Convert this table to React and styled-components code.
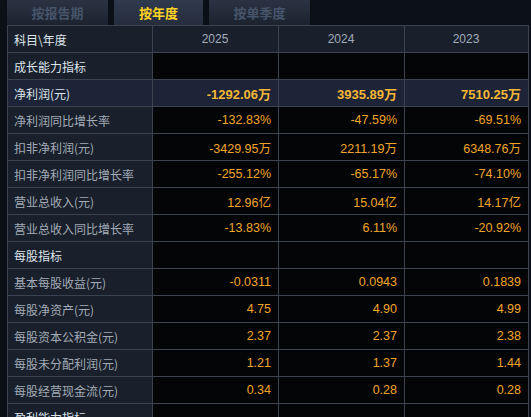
import React from "react";
import styled, { createGlobalStyle } from "styled-components";

const GlobalStyle = createGlobalStyle`
  html, body {
    margin: 0;
    padding: 0;
    background: #0b0f16;
  }
  body {
    font-family: "Liberation Sans", "Noto Sans CJK SC", sans-serif;
  }
`;

const tabs = ["按报告期", "按年度", "按单季度"];
const years = ["2025", "2024", "2023"];

const rows = [
  { label: "成长能力指标", section: true },
  { label: "净利润(元)", values: ["-1292.06万", "3935.89万", "7510.25万"], strong: true },
  { label: "净利润同比增长率", values: ["-132.83%", "-47.59%", "-69.51%"] },
  { label: "扣非净利润(元)", values: ["-3429.95万", "2211.19万", "6348.76万"] },
  { label: "扣非净利润同比增长率", values: ["-255.12%", "-65.17%", "-74.10%"] },
  { label: "营业总收入(元)", values: ["12.96亿", "15.04亿", "14.17亿"] },
  { label: "营业总收入同比增长率", values: ["-13.83%", "6.11%", "-20.92%"] },
  { label: "每股指标", section: true },
  { label: "基本每股收益(元)", values: ["-0.0311", "0.0943", "0.1839"] },
  { label: "每股净资产(元)", values: ["4.75", "4.90", "4.99"] },
  { label: "每股资本公积金(元)", values: ["2.37", "2.37", "2.38"] },
  { label: "每股未分配利润(元)", values: ["1.21", "1.37", "1.44"] },
  { label: "每股经营现金流(元)", values: ["0.34", "0.28", "0.28"] },
  { label: "盈利能力指标", section: true },
];

const Page = styled.div`
  width: 531px;
  height: 417px;
  overflow: hidden;
  padding-left: 7px;
  box-sizing: border-box;
`;

const TabBar = styled.div`
  display: flex;
  gap: 6px;
  height: 25px;
`;

const Tab = styled.div`
  width: ${(p) => (p.active ? "89px" : "101px")};
  display: flex;
  align-items: center;
  justify-content: center;
  font-family: "Noto Sans CJK SC", sans-serif;
  font-size: 13px;
  font-weight: 700;
  color: ${(p) => (p.active ? "#ffd324" : "#46546a")};
  background: ${(p) =>
    p.active
      ? "linear-gradient(#303a4e, #252d3d)"
      : "linear-gradient(#2b3343, #1c222e)"};
`;

const Table = styled.div`
  width: 521px;
  border-top: 1px solid #3b4350;
  border-left: 1px solid #3b4350;
`;

const Row = styled.div`
  display: grid;
  grid-template-columns: 145px 126px 126px 124px;
  height: 27px;
`;

const Cell = styled.div`
  display: flex;
  align-items: center;
  box-sizing: border-box;
  border-right: 1px solid #3b4350;
  border-bottom: 1px solid #3b4350;
  padding: 0 7px 0 6px;
  font-size: 12px;
  white-space: nowrap;
`;

const LabelCell = styled(Cell)`
  font-family: "Noto Sans CJK SC", sans-serif;
  background: ${(p) => (p.strong ? "#1d2437" : "#19202b")};
  color: ${(p) => (p.section || p.strong ? "#dfe4eb" : "#a3abb7")};
`;

const YearCell = styled(Cell)`
  justify-content: center;
  background: #19202b;
  color: #a2abbb;
`;

const ValueCell = styled(Cell)`
  justify-content: flex-end;
  background: ${(p) => (p.strong ? "#1d2437" : "#040507")};
  color: ${(p) => (p.strong ? "#f4b736" : "#f0a52a")};
  font-size: ${(p) => (p.strong ? "13px" : "12.5px")};
  font-weight: ${(p) => (p.strong ? 700 : 400)};
`;

export default function App() {
  return (
    <Page>
      <GlobalStyle />
      <TabBar>
        {tabs.map((t) => (
          <Tab key={t} active={t === "按年度"}>
            {t}
          </Tab>
        ))}
      </TabBar>
      <Table>
        <Row>
          <LabelCell section>科目\年度</LabelCell>
          {years.map((y) => (
            <YearCell key={y}>{y}</YearCell>
          ))}
        </Row>
        {rows.map((r) => (
          <Row key={r.label}>
            <LabelCell section={r.section} strong={r.strong}>
              {r.label}
            </LabelCell>
            {(r.values || ["", "", ""]).map((v, i) => (
              <ValueCell key={i} strong={r.strong}>
                {v}
              </ValueCell>
            ))}
          </Row>
        ))}
      </Table>
    </Page>
  );
}
